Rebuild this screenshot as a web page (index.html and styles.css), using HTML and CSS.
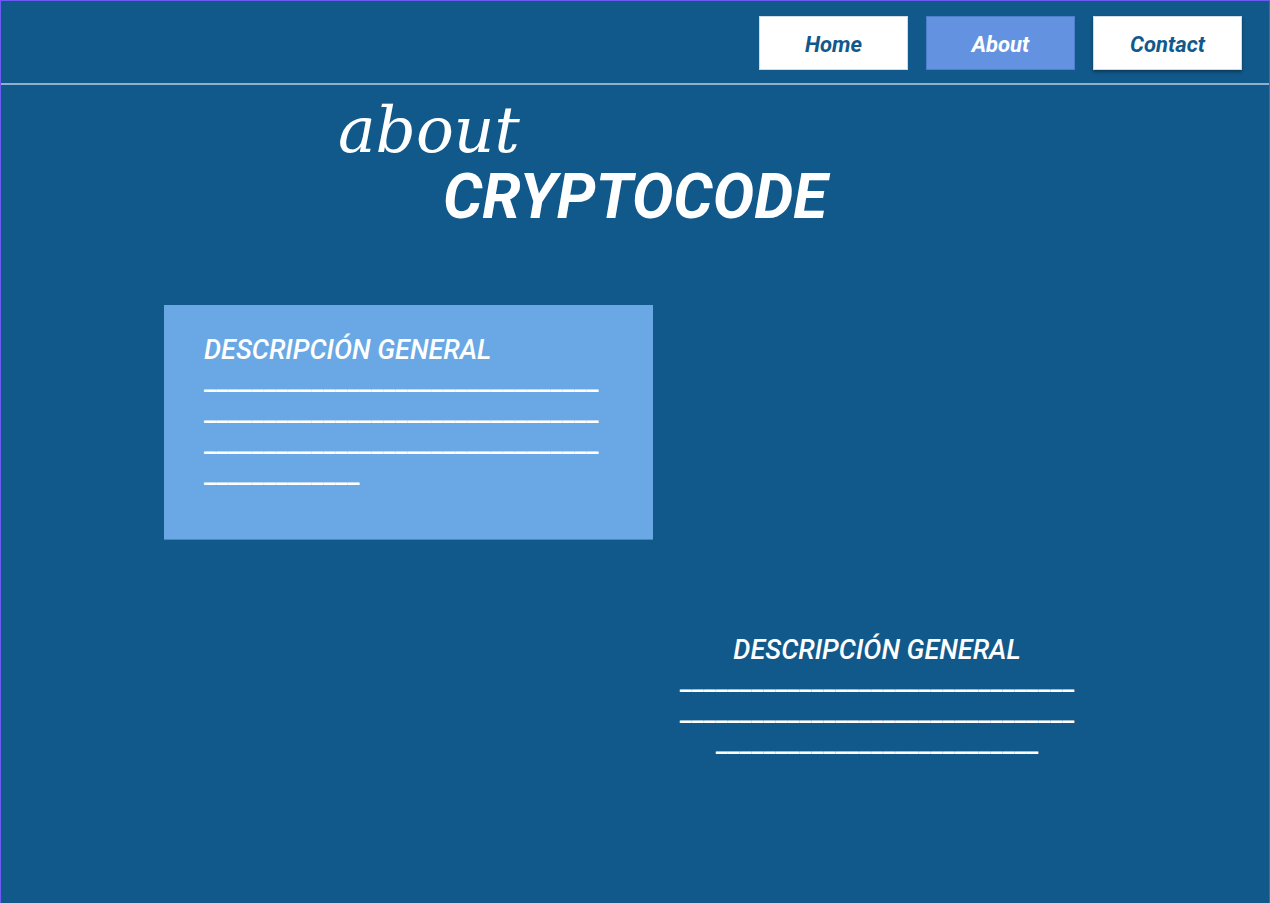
FILE: index.html
```html
<!DOCTYPE html>
<html lang="es">
<head>
<meta charset="utf-8">
<title>About CryptoCode</title>
<link rel="stylesheet" href="styles.css">
</head>
<body>
<div class="page">
  <header class="header">
    <nav class="nav">
      <a class="nav-btn" href="#">Home</a>
      <a class="nav-btn active" href="#">About</a>
      <a class="nav-btn shadow" href="#">Contact</a>
    </nav>
  </header>
  <main class="main">
    <div class="title">
      <div class="title-about">about</div>
      <div class="title-brand">CRYPTOCODE</div>
    </div>
    <section class="card">
      <h2 class="desc-title">DESCRIPCIÓN GENERAL</h2>
      <div class="desc-line">_________________________________</div>
      <div class="desc-line">_________________________________</div>
      <div class="desc-line">_________________________________</div>
      <div class="desc-line">_____________</div>
    </section>
    <section class="plain">
      <h2 class="desc-title">DESCRIPCIÓN GENERAL</h2>
      <div class="desc-line">_________________________________</div>
      <div class="desc-line">_________________________________</div>
      <div class="desc-line">___________________________</div>
    </section>
  </main>
</div>
</body>
</html>
```
FILE: styles.css
```css
* { box-sizing: border-box; }
html, body { margin: 0; padding: 0; }
body {
  background: #11598b;
  font-family: Roboto, "Liberation Sans", sans-serif;
  color: #fff;
}
.page {
  width: 1270px;
  height: 903px;
  border-top: 1px solid #6c5cf4;
  border-left: 1px solid #6c5cf4;
  border-right: 1px solid #5a55d8;
  overflow: hidden;
}
.header {
  height: 84px;
  border-bottom: 2px solid #8db1cc;
  display: flex;
  justify-content: flex-end;
  padding: 15px 27px 0 0;
}
.nav { display: flex; gap: 18px; align-items: flex-start; }
.nav-btn {
  width: 149px;
  height: 54px;
  display: flex;
  align-items: center;
  justify-content: center;
  padding-top: 2px;
  background: #fff;
  color: #11598b;
  font-weight: 700;
  font-style: italic;
  font-size: 22px;
  text-decoration: none;
  border: 1px solid #d0dbe6;
}
.nav-btn.active {
  background: #6393e0;
  color: #fff;
  border-color: #4c80c8;
}
.nav-btn.shadow { box-shadow: 0 2px 3px rgba(0,0,0,0.35); }
.main { padding-left: 163px; }
.title { padding-left: 174px; padding-top: 14px; height: 220px; }
.title-about {
  font-family: "DejaVu Serif", "Liberation Serif", serif;
  font-style: italic;
  font-size: 63px;
  line-height: 63px;
  height: 63px;
}
.title-brand {
  margin-left: 105px;
  font-weight: 700;
  font-style: italic;
  font-size: 62px;
  line-height: 70px;
}
.card {
  width: 489px;
  height: 235px;
  background: #69a8e4;
  padding: 30px 0 0 40px;
  border-bottom: 1px solid #4a86c4;
}
.desc-title {
  margin: 0;
  font-size: 27px;
  line-height: 31px;
  font-weight: 500;
  font-style: italic;
}
.desc-line {
  font-size: 26.7px;
  line-height: 31px;
  font-weight: 500;
  white-space: nowrap;
}
.plain {
  width: 420px;
  margin: 95px 0 0 503px;
  text-align: center;
}
```
